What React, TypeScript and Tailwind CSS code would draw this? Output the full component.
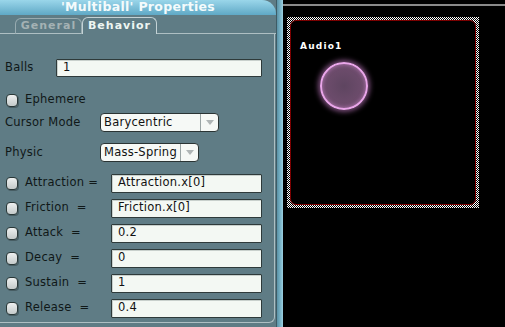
import React from "react";

const font = { fontFamily: '"DejaVu Sans", Verdana, sans-serif' };
const txt = "text-[11.5px] tracking-[0.25px]";

function Check() {
  return (
    <div className="w-[12px] h-[13px] rounded-[4px] border border-[#2a3838] bg-gradient-to-b from-[#eef0f0] to-[#c4caca] shadow-[1px_1px_0_rgba(0,0,0,0.25)] shrink-0" />
  );
}

function AttrRow({ label, value }: { label: string; value: string }) {
  return (
    <div className="flex items-center h-[18px] mt-[7px]">
      <div className="ml-[6px]">
        <Check />
      </div>
      <div className={`ml-[7px] w-[86px] ${txt} text-[#101818] whitespace-pre`}>{label}</div>
      <div className={`h-[19px] w-[151px] border border-[#2e3a3a] bg-[#f3f8f3] rounded-[1px] flex items-center pl-[6px] ${txt} text-[#111] shadow-[inset_1px_1px_0_#c8d0cc]`}>
        {value}
      </div>
    </div>
  );
}

function Select({ value, width, split }: { value: string; width: number; split: number }) {
  return (
    <div
      className={`h-[19px] border border-[#2a3434] bg-[#f6f9f6] rounded-[4px] flex items-stretch ${txt} text-[#111]`}
      style={{ width }}
    >
      <div className="flex items-center pl-[3px] whitespace-nowrap overflow-hidden" style={{ width: split }}>
        {value}
      </div>
      <div className="flex-1 border-l border-[#9aa4a4] flex items-center justify-center">
        <svg width="8" height="5" viewBox="0 0 8 5">
          <path d="M0 0 L8 0 L4 5 Z" fill="#b0b6b6" />
        </svg>
      </div>
    </div>
  );
}

export default function App() {
  return (
    <div className="w-[505px] h-[327px] flex bg-black overflow-hidden" style={font}>
      {/* Left properties panel */}
      <div className="w-[276px] h-full flex flex-col bg-[#5f7c85]">
        <div className="h-[15px] rounded-tr-[14px] bg-gradient-to-b from-[#9ad6ea] to-[#5fa9c6] flex items-center justify-center text-[12.5px] font-bold text-[#f4fbfc] tracking-[0.3px] shrink-0">
          'Multiball' Properties
        </div>
        <div className="h-[18px] mt-[1px] flex items-end shrink-0">
          <div className="w-[15px] border-b border-[#aebfc3] h-full" />
          <div className="w-[67px] h-[16px] rounded-t-[6px] border border-[#98abb0] border-b-[#aebfc3] flex items-center justify-center text-[11px] font-bold text-[#a4b2b4] tracking-[1px]">
            General
          </div>
          <div className="w-[75px] h-[17px] rounded-t-[6px] border border-b-0 border-[#c4d3d6] flex items-center justify-center text-[11px] font-bold text-[#eef6f2] tracking-[1px]">
            Behavior
          </div>
          <div className="flex-1 border-b border-[#aebfc3] h-full" />
        </div>
        <div className="flex-1 mr-[1px] mb-[4px] border-r border-b border-[#aebfc3] rounded-br-[6px] flex flex-col">
          <div className="flex items-center h-[18px] mt-[25px]">
            <div className={`ml-[5px] w-[51px] ${txt} text-[#101818]`}>Balls</div>
            <div className={`h-[18px] w-[206px] border border-[#2e3a3a] bg-[#f3f8f3] rounded-[1px] flex items-center pl-[6px] ${txt} text-[#111] shadow-[inset_1px_1px_0_#c8d0cc]`}>
              1
            </div>
          </div>
          <div className="flex items-center h-[18px] mt-[14px]">
            <div className="ml-[6px]">
              <Check />
            </div>
            <div className={`ml-[7px] ${txt} text-[#101818]`}>Ephemere</div>
          </div>
          <div className="flex items-center h-[19px] mt-[4px]">
            <div className={`ml-[5px] w-[95px] ${txt} text-[#101818]`}>Cursor Mode</div>
            <Select value="Barycentric" width={119} split={99} />
          </div>
          <div className="flex items-center h-[19px] mt-[11px]">
            <div className={`ml-[5px] w-[95px] ${txt} text-[#101818]`}>Physic</div>
            <Select value="Mass-Spring" width={99} split={79} />
          </div>
          <div className="mt-[5px]" />
          <AttrRow label="Attraction =" value="Attraction.x[0]" />
          <AttrRow label="Friction  =" value="Friction.x[0]" />
          <AttrRow label="Attack  =" value="0.2" />
          <AttrRow label="Decay  =" value="0" />
          <AttrRow label="Sustain  =" value="1" />
          <AttrRow label="Release  =" value="0.4" />
        </div>
      </div>
      {/* Vertical splitter bar */}
      <div className="w-[7px] h-full border-l border-[#3e5c66] bg-gradient-to-r from-[#5a92a6] via-[#74b0c4] to-[#9ccfe0]" />
      {/* Right canvas */}
      <div className="flex-1 h-full flex flex-col">
        <div className="h-[2px] mt-[4px] bg-[#8a8a8a]" />
        <div
          className="ml-[4px] mt-[11px] w-[192px] h-[191px] p-[3px]"
          style={{ background: "repeating-conic-gradient(#ffffff 0 25%, #000000 0 50%) 0 0/2px 2px" }}
        >
          <div className="relative w-full h-full bg-black rounded-[6px] border border-[#7a0000]">
            <div className="absolute left-[9px] top-[19px] text-[9px] font-bold text-white tracking-[1.2px]">
              Audio1
            </div>
            <div
              className="absolute left-[29px] top-[41px] w-[48px] h-[48px] rounded-full border-2 border-[#eaa6ea]"
              style={{
                background: "radial-gradient(circle, #5e4560 0%, #6d4c6c 60%, #8a5e88 100%)",
                boxShadow: "0 0 5px 2px rgba(220,140,220,0.55), inset 0 0 4px rgba(230,150,230,0.5)",
              }}
            />
          </div>
        </div>
      </div>
    </div>
  );
}
